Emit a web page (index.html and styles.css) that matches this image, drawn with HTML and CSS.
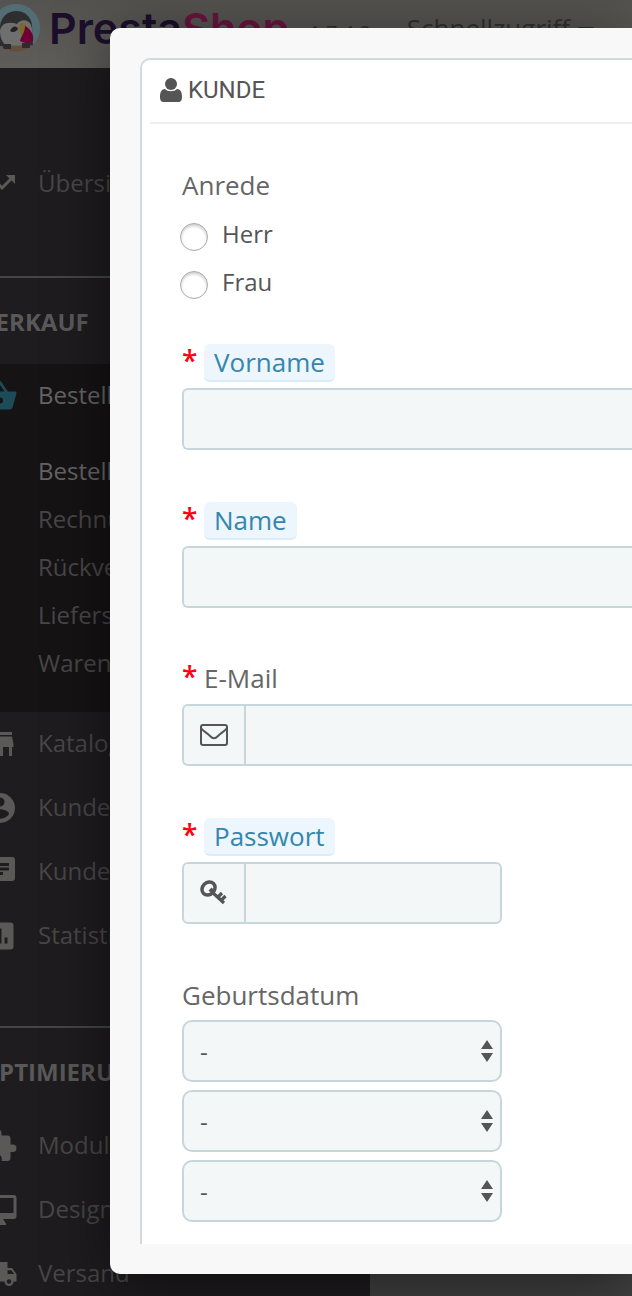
FILE: index.html
```
<!DOCTYPE html>
<html lang="de">
<head>
<meta charset="UTF-8" />
<meta name="viewport" content="width=device-width, initial-scale=1" />
<title>Kunde - PrestaShop</title>
<link rel="stylesheet" href="styles.css">
</head>
<body>
<header class="topbar">
  <a class="brand" href="#">
    <svg class="brand-logo" viewBox="0 0 48 48" aria-hidden="true">
      <defs><clipPath id="logo-clip"><circle cx="24" cy="24" r="24"/></clipPath></defs>
      <g clip-path="url(#logo-clip)">
        <rect width="48" height="48" fill="#a4dbe8"/>
        <path d="M8 42V22C9 12 17 7 24 7c9 0 15 6 16 14l1 21z" fill="#5b5b60"/>
        <path d="M8 28c0-8 8-11 17-8 4-5 11-5 14 1 3 9 1 17-3 21H14c-4-4-6-9-6-14z" fill="#ddd"/>
        <path d="M28 20c4-2 7 1 8 5l-4 9c-4-3-6-9-4-14z" fill="#f5d34f"/>
        <path d="M33 22c6 3 9 9 8 15-4 4-9 2-13 0 1-5 5-8 5-15z" fill="#df0067"/>
        <path d="M18 27c3 2 6 1 8-2-1-3-5-4-8 2z" fill="#444"/>
        <path d="M6 42l36-1-2 7H10z" fill="#c4a07a"/>
        <path d="M11 40h8v5h-8zM30 39h8v5h-8z" fill="#57575c"/>
      </g>
    </svg>
    <span class="brand-name">Presta<b>Shop</b></span>
  </a>
  <span class="version">1.7.4.2</span>
  <a class="quick" href="#">Schnellzugriff <span class="caret"></span></a>
</header>

<div class="page">
  <nav class="sidebar">
    <a class="item dashboard" href="#">
      <svg viewBox="0 0 24 24"><path d="M16 6l2.3 2.3-4.9 4.9-4-4L2 16.6 3.4 18l6-6 4 4 6.3-6.3L22 12V6z"/></svg>
      <span>Übersicht</span>
    </a>
    <h2>Verkauf</h2>
    <div class="open">
      <a class="item current" href="#">
        <svg viewBox="0 0 24 24"><path d="M17.21 9l-4.38-6.56a1 1 0 0 0-1.66 0L6.79 9H2c-.55 0-1 .45-1 1l.04.27 2.54 9.27A2 2 0 0 0 5.5 21h13a2 2 0 0 0 1.93-1.46l2.54-9.27L23 10c0-.55-.45-1-1-1zM9 9l3-4.4L15 9zm3 8a2 2 0 1 1 0-4 2 2 0 0 1 0 4z"/></svg>
        <span>Bestellungen</span>
      </a>
      <ul>
        <li><a class="active" href="#">Bestellungen</a></li>
        <li><a href="#">Rechnungen</a></li>
        <li><a href="#">Rückvergütungen</a></li>
        <li><a href="#">Lieferscheine</a></li>
        <li><a href="#">Warenkörbe</a></li>
      </ul>
    </div>
    <a class="item" href="#">
      <svg viewBox="0 0 24 24"><path d="M20 4H4v2h16zm1 10v-2l-1-5H4l-1 5v2h1v6h10v-6h4v6h2v-6zm-9 4H6v-4h6z"/></svg>
      <span>Katalog</span>
    </a>
    <a class="item" href="#">
      <svg viewBox="0 0 24 24"><path d="M12 2a10 10 0 1 0 0 20 10 10 0 0 0 0-20zm0 3a3 3 0 1 1 0 6 3 3 0 0 1 0-6zm0 14.2A7.2 7.2 0 0 1 6 16c0-2 4-3.1 6-3.1s6 1.1 6 3.1a7.2 7.2 0 0 1-6 3.2z"/></svg>
      <span>Kunden</span>
    </a>
    <a class="item" href="#">
      <svg viewBox="0 0 24 24"><path d="M20 2H4a2 2 0 0 0-2 2v18l4-4h14a2 2 0 0 0 2-2V4a2 2 0 0 0-2-2zM6 6h12v2H6zm8 8H6v-2h8zm4-3H6V9h12z"/></svg>
      <span>Kundenservice</span>
    </a>
    <a class="item" href="#">
      <svg viewBox="0 0 24 24"><path d="M19 3H5a2 2 0 0 0-2 2v14c0 1.1.9 2 2 2h14a2 2 0 0 0 2-2V5a2 2 0 0 0-2-2zM9 17H7v-7h2zm4 0h-2V7h2zm4 0h-2v-4h2z"/></svg>
      <span>Statistiken</span>
    </a>
    <h2 class="next">Optimierung</h2>
    <a class="item" href="#">
      <svg viewBox="0 0 24 24"><path d="M20.5 11H19V7a2 2 0 0 0-2-2h-4V3.5a2.5 2.5 0 0 0-5 0V5H4a2 2 0 0 0-2 2v3.8h1.5a2.7 2.7 0 0 1 0 5.4H2V20c0 1.1.9 2 2 2h3.8v-1.5a2.7 2.7 0 0 1 5.4 0V22H17a2 2 0 0 0 2-2v-4h1.5a2.5 2.5 0 0 0 0-5z"/></svg>
      <span>Module</span>
    </a>
    <a class="item" href="#">
      <svg viewBox="0 0 24 24"><path d="M21 2H3a2 2 0 0 0-2 2v12c0 1.1.9 2 2 2h7l-2 3v1h8v-1l-2-3h7a2 2 0 0 0 2-2V4a2 2 0 0 0-2-2zm0 12H3V4h18z"/></svg>
      <span>Design</span>
    </a>
    <a class="item" href="#">
      <svg viewBox="0 0 24 24"><path d="M20 8h-3V4H3a2 2 0 0 0-2 2v11h2a3 3 0 0 0 6 0h6a3 3 0 0 0 6 0h2v-5zM6 18.5a1.5 1.5 0 1 1 0-3 1.5 1.5 0 0 1 0 3zm13.5-9l2 2.5H17V9.500zm-1.500 9a1.500 1.500 0 1 1 0-3 1.500 1.500 0 0 1 0 3z"/></svg>
      <span>Versand</span>
    </a>
  </nav>
</div>

<div class="overlay">
  <main class="modal">
    <form class="panel">
      <h1>
        <svg viewBox="0 0 22 24" aria-hidden="true"><ellipse cx="11" cy="6" rx="6" ry="6"/><path d="M5 11c3 3 9 3 12 0 4 0 5 4 5 8 0 3-1 5-4 5H4c-3 0-4-2-4-5 0-4 1-8 5-8z"/></svg>
        Kunde
      </h1>

      <fieldset class="group gender">
        <legend>Anrede</legend>
        <label><input type="radio" name="gender"> Herr</label>
        <label><input type="radio" name="gender"> Frau</label>
      </fieldset>

      <div class="group">
        <label class="title" for="firstname"><i>*</i><span class="hint">Vorname</span></label>
        <input class="field" id="firstname" type="text">
      </div>

      <div class="group">
        <label class="title" for="lastname"><i>*</i><span class="hint">Name</span></label>
        <input class="field" id="lastname" type="text">
      </div>

      <div class="group">
        <label class="title" for="email"><i>*</i><span>E-Mail</span></label>
        <div class="field addon">
          <span class="icon">
            <svg width="28" height="22" viewBox="0 0 28 22" fill="none" stroke="#555" stroke-width="2"><rect x="1" y="1" width="26" height="20" rx="2"/><path d="M1 4c2 3 6 5 9 8 3 3 5 3 8 0 3-3 7-5 9-8"/></svg>
          </span>
          <input id="email" type="email">
        </div>
      </div>

      <div class="group">
        <label class="title" for="password"><i>*</i><span class="hint">Passwort</span></label>
        <div class="field addon short">
          <span class="icon">
            <svg width="28" height="26" viewBox="0 0 28 26" fill="none" stroke="#555"><ellipse cx="8.5" cy="8.5" rx="7" ry="6" transform="rotate(-45 8.5 8.5)" stroke-width="3.5"/><path d="M12 12l12 11M18 17l4-4M21.5 20l4-4" stroke-width="3.2"/><path d="M10 12l3-3" stroke-width="4"/></svg>
          </span>
          <input id="password" type="password">
        </div>
      </div>

      <fieldset class="group birthday">
        <legend>Geburtsdatum</legend>
        <select class="field short" aria-label="Tag"><option>-</option></select>
        <select class="field short" aria-label="Monat"><option>-</option></select>
        <select class="field short" aria-label="Jahr"><option>-</option></select>
      </fieldset>
    </form>
  </main>
</div>
</body>
</html>
```
FILE: styles.css
```
* { box-sizing: border-box; }
body {
  margin: 0; height: 100vh; overflow: hidden; background: #424142;
  font-family: "Open Sans", "Noto Sans", sans-serif; font-size: 24px; color: #555;
}
a { color: inherit; text-decoration: none; }

/* admin page behind the dialog */
.topbar {
  height: 68px; display: flex; align-items: center; white-space: nowrap; padding-bottom: 12px;
  background: linear-gradient(#555350, #5f5d5a); color: #303133;
}
.brand { display: flex; align-items: center; gap: 9px; margin-left: -8px; }
.brand-logo { width: 48px; height: 48px; filter: brightness(0.5); }
.brand-name { font-family: Inter, sans-serif; font-weight: 600; font-size: 43px; line-height: 56px; color: #1c0f2c; }
.brand-name b { font-weight: 600; color: #6a1540; }
.version { margin-left: 20px; font-size: 20px; padding-top: 8px; }
.quick { margin-left: 36px; display: flex; align-items: center; gap: 8px; font-size: 26px; }
.caret { margin-top: 6px; border: 8px solid transparent; border-top-color: #303133; border-bottom: 0; }

.sidebar { width: 370px; padding-top: 84px; background: #1e1c1e; color: #484748; }
.item { display: flex; align-items: center; gap: 20px; height: 64px; margin-left: -18px; }
.item svg { width: 36px; height: 36px; fill: #5a5958; }
.item span { padding-bottom: 4px; }
.item.dashboard { margin-bottom: 60px; }
.sidebar h2 {
  margin: 0; height: 88px; padding-top: 28px; border-top: 2px solid #434547;
  font-size: 24px; line-height: 32px; text-transform: uppercase; color: #5a5959;
  text-indent: -20px;
}
.sidebar .next { margin-top: 58px; }
.open { background: #151314; padding-bottom: 26px; }
.open .item { color: #656465; }
.open .item svg { fill: #1b4c58; }
.open ul { list-style: none; margin: 0; padding: 18px 0 0 38px; }
.open li { height: 48px; line-height: 50px; }
.open .active { color: #656465; }

/* dialog */
.overlay { position: absolute; top: 28px; left: 110px; right: 0; }
.modal {
  padding: 30px 0 30px 30px; background: #f8f8f8; border-radius: 10px 0 0 10px;
  box-shadow: 0 10px 60px rgba(0, 0, 0, 0.5);
}
.panel {
  padding: 0 0 14px 40px; background: #fff;
  border: 2px solid #d3dadf; border-width: 2px 0 0 2px; border-radius: 10px 0 0 0;
}
.panel h1 {
  display: flex; align-items: center; gap: 6px; height: 64px; margin: 0 0 42px -32px; padding: 0 0 2px 10px;
  border-bottom: 2px solid #eee;
  font: 400 24px/60px "Ubuntu Condensed", Roboto, sans-serif; text-transform: uppercase;
}
.panel h1 svg { width: 22px; height: 24px; fill: #555; }
.group { margin: 0 0 52px; padding: 0; border: 0; }
.group legend, .title { height: 44px; padding: 0; font-size: 26px; line-height: 38px; color: #666; }
.title { display: flex; }
.title span { line-height: 36px; }
.title i { width: 22px; font-size: 28px; line-height: 32px; font-style: normal; font-weight: 600; color: #f01; }
.hint {
  height: 38px; padding: 0 10px; color: #3586ae;
  background: #ecf6fc; border-bottom: 2px solid #d8edf7; border-radius: 6px;
}
.field {
  display: block; width: 100%; height: 62px; padding: 0 16px;
  background: #f3f7f8; border: 2px solid #c7d6db; border-radius: 6px 0 0 6px;
  font: inherit; color: #555; outline: 0;
}
input.field, .addon { border-right: 0; }
.short { width: 320px; border-right: 2px solid #c7d6db; border-radius: 6px; }
.addon.short { border-right: 2px solid #c7d6db; }
.addon { display: flex; padding: 0; }
.addon .icon { width: 62px; display: grid; place-items: center; border-right: 2px solid #c7d6db; }
.addon input { flex: 1; min-width: 0; border: 0; background: none; font: inherit; outline: 0; }

.gender { margin-bottom: 38px; }
.gender label { display: flex; align-items: center; gap: 14px; height: 48px; line-height: 48px; }
.gender input {
  appearance: none; width: 28px; height: 28px; margin: 6px 0 0 -2px; border: 1px solid #aaa; border-radius: 50%;
  background: #fff; box-shadow: inset 0 2px 3px #ccc;
}
.birthday { margin: 0; }
select.field {
  appearance: none; margin-bottom: 8px; border-radius: 10px;
  background: #f3f7f8 url("data:image/svg+xml,%3Csvg xmlns='http://www.w3.org/2000/svg' width='12' height='22' fill='%23555'%3E%3Cpath d='M6 0l6 9H0zM6 22l6-9H0z'/%3E%3C/svg%3E") no-repeat right 7px center;
}
```
